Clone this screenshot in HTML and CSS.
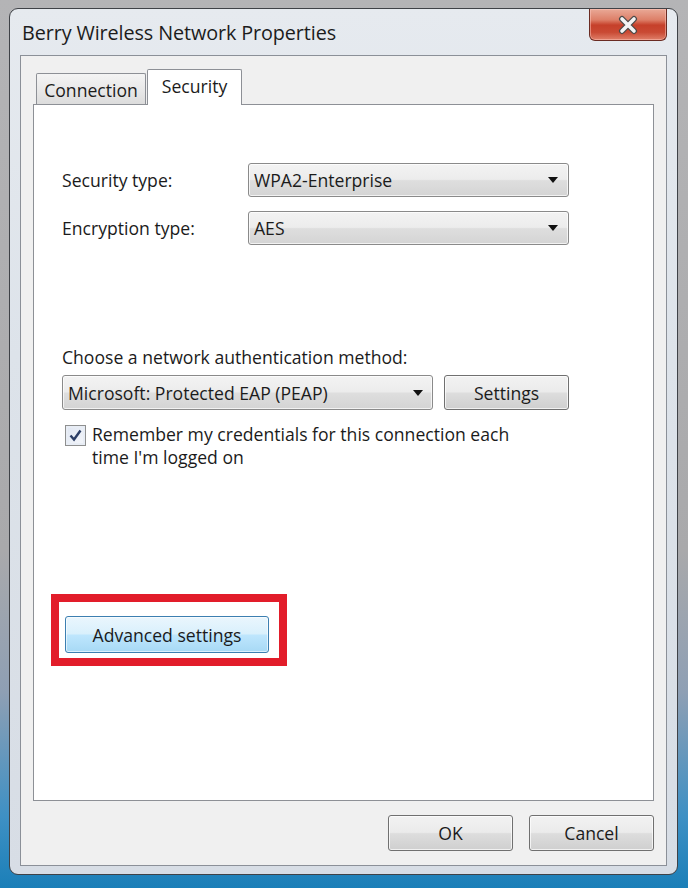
FILE: index.html
```html
<!DOCTYPE html>
<html>
<head>
<meta charset="utf-8">
<link rel="stylesheet" href="styles.css">
</head>
<body>
<div class="window">
  <div class="titlebar">
    <div class="title">Berry Wireless Network Properties</div>
    <div class="close">
      <svg width="22" height="20" viewBox="0 0 22 20">
        <path d="M5 4 L17 16 M17 4 L5 16" stroke="#4a4a4a" stroke-width="6" stroke-linecap="round" fill="none"/>
        <path d="M5 4 L17 16 M17 4 L5 16" stroke="#f4f4f4" stroke-width="3.6" stroke-linecap="round" fill="none"/>
      </svg>
    </div>
  </div>
  <div class="client">
    <div class="tabs">
      <div class="tab">Connection</div>
      <div class="tab active">Security</div>
    </div>
    <div class="panel">
      <div class="grid">
        <div class="label">Security type:</div>
        <div class="select wide"><span>WPA2-Enterprise</span><i class="arrow"></i></div>
        <div class="label">Encryption type:</div>
        <div class="select wide"><span>AES</span><i class="arrow"></i></div>
      </div>
      <div class="label choose">Choose a network authentication method:</div>
      <div class="authrow">
        <div class="select auth"><span>Microsoft: Protected EAP (PEAP)</span><i class="arrow"></i></div>
        <div class="button settings">Settings</div>
      </div>
      <div class="checkrow">
        <div class="checkbox">
          <svg width="15" height="15" viewBox="0 0 15 15"><path d="M2.5 7.5 L6 11.5 L12.5 2.5" stroke="#2c3e66" stroke-width="2.4" fill="none"/></svg>
        </div>
        <div class="checktext">Remember my credentials for this connection each<br>time I'm logged on</div>
      </div>
      <div class="highlight">
        <div class="button advanced">Advanced settings</div>
      </div>
    </div>
    <div class="footer">
      <div class="button ok">OK</div>
      <div class="button ok">Cancel</div>
    </div>
  </div>
</div>
</body>
</html>
```

FILE: styles.css
```css
html, body {
  margin: 0;
  padding: 0;
}
body {
  width: 688px;
  height: 888px;
  overflow: hidden;
  background: linear-gradient(to bottom, #b4b4b6 0%, #a9a9ab 62%, #8e9fb4 78%, #3e90c4 92%, #1b7fb8 100%);
  font-family: "Open Sans", "Noto Sans", sans-serif;
  color: #1b1b1b;
}
.window {
  margin: 8px 0 0 9px;
  width: 669px;
  box-sizing: border-box;
  border: 1px solid #3f4247;
  border-radius: 9px;
  background: linear-gradient(to bottom, #e6eaef 0%, #dde3ea 40%, #d7dde5 100%);
  padding: 0 10px 8px 10px;
}
.titlebar {
  height: 46px;
  display: flex;
  justify-content: space-between;
  align-items: flex-start;
}
.title {
  font-size: 19.8px;
  margin-top: 10px;
  margin-left: 2px;
  color: #1c1c1c;
  letter-spacing: -0.1px;
}
.close {
  width: 78px;
  height: 32px;
  box-sizing: border-box;
  border: 1px solid #6a2b22;
  border-top: none;
  border-radius: 0 0 6px 6px;
  background: linear-gradient(to bottom, #e9a997 0%, #dd7f68 35%, #c6402a 52%, #c94a34 75%, #e0806a 100%);
  display: flex;
  align-items: center;
  justify-content: center;
  box-shadow: inset 0 0 0 1px rgba(255, 200, 190, 0.5);
}
.client {
  border: 1px solid #8b9098;
  background: #f0f0f0;
  padding: 13px 12px 14px 12px;
}
.tabs {
  display: flex;
  align-items: flex-end;
  height: 36px;
  margin-bottom: -1px;
  padding-left: 3px;
  position: relative;
  z-index: 2;
}
.tab {
  box-sizing: border-box;
  height: 31px;
  margin-bottom: 1px;
  width: 110px;
  border: 1px solid #8d9096;
  border-bottom: none;
  border-radius: 2px 2px 0 0;
  background: linear-gradient(to bottom, #f4f4f4 0%, #e9e9e9 50%, #dcdcdc 100%);
  font-size: 17.6px;
  display: flex;
  align-items: center;
  justify-content: center;
  padding-top: 2px;
}
.tab.active {
  width: 95px;
  height: 36px;
  margin-bottom: 0;
  margin-left: 1px;
  background: #ffffff;
  padding-top: 0;
  padding-bottom: 3px;
}
.panel {
  box-sizing: border-box;
  height: 697px;
  border: 1px solid #8d9096;
  background: #ffffff;
  padding: 58px 0 0 28px;
  position: relative;
  z-index: 1;
}
.grid {
  display: grid;
  grid-template-columns: 186px 321px;
  row-gap: 14px;
  align-items: center;
}
.label {
  font-size: 17.6px;
  line-height: 20px;
}
.select {
  box-sizing: border-box;
  height: 34px;
  border: 1px solid #8a8a8a;
  border-radius: 3px;
  background: linear-gradient(to bottom, #f3f3f3 0%, #ececec 48%, #dedede 52%, #d4d4d4 100%);
  display: flex;
  align-items: center;
  justify-content: space-between;
  padding: 0 10px 0 5px;
  font-size: 17.6px;
  box-shadow: inset 0 0 0 1px rgba(255,255,255,0.7);
}
.arrow {
  width: 0;
  height: 0;
  border-left: 5px solid transparent;
  border-right: 5px solid transparent;
  border-top: 6px solid #111;
}
.choose {
  margin-top: 102px;
}
.authrow {
  display: flex;
  gap: 11px;
  margin-top: 8px;
}
.select.auth {
  width: 371px;
  height: 35px;
  padding-right: 9px;
}
.button {
  box-sizing: border-box;
  border: 1px solid #707070;
  border-radius: 3px;
  background: linear-gradient(to bottom, #f2f2f2 0%, #ebebeb 48%, #dddddd 52%, #cfcfcf 100%);
  box-shadow: inset 0 0 0 1px rgba(255,255,255,0.7);
  display: flex;
  align-items: center;
  justify-content: center;
  font-size: 17.6px;
}
.settings {
  width: 125px;
  height: 35px;
}
.checkrow {
  display: flex;
  margin-top: 14px;
  margin-left: 3px;
}
.checkbox {
  box-sizing: border-box;
  width: 21px;
  height: 21px;
  border: 1px solid #8e8f8f;
  background: linear-gradient(135deg, #dfe6f2 0%, #f4f6fa 100%);
  display: flex;
  align-items: center;
  justify-content: center;
  margin-top: 1px;
  box-shadow: inset 0 0 0 2px #e8edf5;
}
.checktext {
  font-size: 17.6px;
  line-height: 23px;
  margin-left: 6px;
  margin-top: -1px;
}
.highlight {
  box-sizing: border-box;
  width: 236px;
  height: 72px;
  margin-top: 125px;
  margin-left: -11px;
  border: 8px solid #e21d2a;
  padding: 14px 0 0 6px;
  background: #ffffff;
}
.advanced {
  width: 204px;
  height: 37px;
  border-color: #3c7fb1;
  background: linear-gradient(to bottom, #eaf6fd 0%, #d9f0fc 48%, #bee6fd 52%, #a7d9f5 100%);
  box-shadow: inset 0 0 0 1px rgba(255,255,255,0.6);
}
.footer {
  display: flex;
  justify-content: flex-end;
  gap: 16px;
  margin-top: 14px;
  padding-right: 0;
}
.ok {
  width: 125px;
  height: 36px;
}
```
